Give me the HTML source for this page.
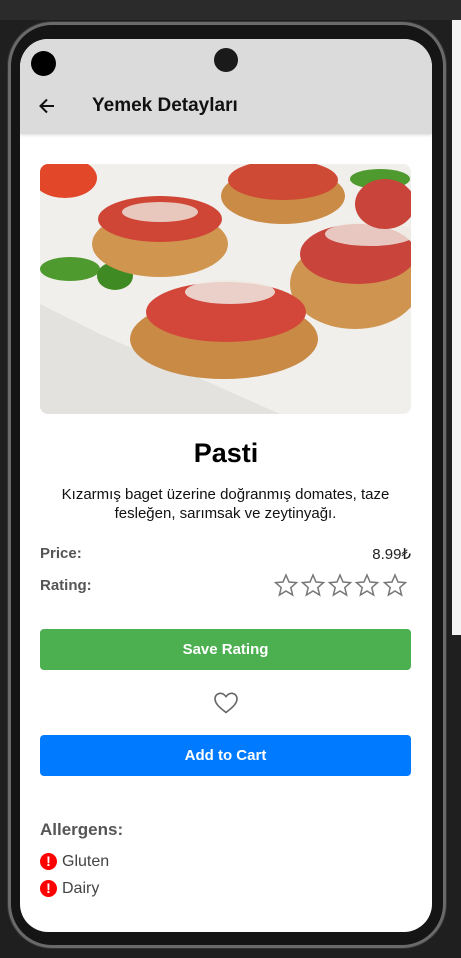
<!DOCTYPE html>
<html><head><meta charset="utf-8"><style>
*{margin:0;padding:0;box-sizing:border-box}
body{width:461px;height:958px;overflow:hidden;background:#1f1f1f;font-family:"Liberation Sans",sans-serif;position:relative}
.a{position:absolute}
</style></head><body>
<div class="a" style="left:0;top:0;width:461px;height:20px;background:#2b2b2b"></div>
<div class="a" style="left:452px;top:20px;width:9px;height:615px;background:#f3f3f3"></div>
<div class="a" style="left:8px;top:22px;width:438px;height:926px;border-radius:44px;background:#151515;border:3px solid #6a6a6a;box-shadow:0 0 0 1px #333"></div>
<div class="a" style="left:20px;top:39px;width:412px;height:893px;border-radius:28px;background:#fff;overflow:hidden">
  <div class="a" style="left:0;top:0;width:412px;height:95px;background:#dbdbdb;box-shadow:0 1px 3px rgba(0,0,0,.15)"></div>
  <div class="a" style="left:11px;top:12px;width:25px;height:25px;border-radius:50%;background:#000"></div>
  <div class="a" style="left:194px;top:9px;width:24px;height:24px;border-radius:50%;background:#1a1a1a"></div>
  <svg class="a" style="left:17px;top:57px" width="20" height="20" viewBox="0 0 20 20"><path d="M17 10H4M10 3.5L3.5 10 10 16.5" stroke="#111" stroke-width="2" fill="none"/></svg>
  <div class="a" style="left:72px;top:56px;font-size:19px;font-weight:bold;color:#111">Yemek Detayları</div>
</div>
<svg class="a" style="left:40px;top:164px;border-radius:8px" width="371" height="250" viewBox="0 0 371 250">
  <rect width="371" height="250" fill="#f1efec"/>
  <polygon points="0,140 60,170 240,250 0,250" fill="#e4e2de"/>
  <ellipse cx="25" cy="14" rx="32" ry="20" fill="#e2472a"/>
  <ellipse cx="30" cy="105" rx="30" ry="12" fill="#4f9a2e"/>
  <ellipse cx="75" cy="112" rx="18" ry="14" fill="#3f8a22"/>
  <ellipse cx="340" cy="15" rx="30" ry="10" fill="#4f9a2e"/>
  <ellipse cx="243" cy="32" rx="62" ry="28" fill="#c98b45"/>
  <ellipse cx="243" cy="16" rx="55" ry="20" fill="#cf4a34"/>
  <ellipse cx="120" cy="80" rx="68" ry="33" fill="#d09650"/>
  <ellipse cx="120" cy="55" rx="62" ry="23" fill="#cf4636"/>
  <ellipse cx="120" cy="48" rx="38" ry="10" fill="#ede7e0" opacity=".8"/>
  <ellipse cx="315" cy="120" rx="65" ry="45" fill="#cf9550"/>
  <ellipse cx="318" cy="90" rx="58" ry="30" fill="#c9443a"/>
  <ellipse cx="330" cy="70" rx="45" ry="12" fill="#efe9e2" opacity=".8"/>
  <ellipse cx="345" cy="40" rx="30" ry="25" fill="#c9443a"/>
  <ellipse cx="184" cy="175" rx="94" ry="40" fill="#c98a45"/>
  <ellipse cx="186" cy="148" rx="80" ry="30" fill="#d2473a"/>
  <ellipse cx="190" cy="128" rx="45" ry="12" fill="#efe9e2" opacity=".85"/>
</svg>
<div class="a" style="left:20px;top:438px;width:412px;text-align:center;font-size:27px;font-weight:bold;color:#000">Pasti</div>
<div class="a" style="left:40px;top:485px;width:371px;text-align:center;font-size:15px;line-height:19px;color:#111">Kızarmış baget üzerine doğranmış domates, taze fesleğen, sarımsak ve zeytinyağı.</div>
<div class="a" style="left:40px;top:545px;font-size:15px;font-weight:bold;color:#555">Price:</div>
<div class="a" style="left:340px;top:545px;width:71px;text-align:right;font-size:15px;color:#222">8.99₺</div>
<div class="a" style="left:40px;top:577px;font-size:15px;font-weight:bold;color:#555">Rating:</div>
<svg class="a" style="left:274px;top:573px" width="134" height="26" viewBox="0 0 134 26">
  <g fill="none" stroke="#777" stroke-width="1.5">
    <path id="s" d="M12 2l3 7 7.5.6-5.7 5 1.8 7.4L12 18l-6.6 4 1.8-7.4-5.7-5L9 9z"/>
    <use href="#s" x="27"/><use href="#s" x="54"/><use href="#s" x="81"/><use href="#s" x="109"/>
  </g>
</svg>
<div class="a" style="left:40px;top:629px;width:371px;height:41px;border-radius:4px;background:#4caf50;color:#fff;font-weight:bold;font-size:15px;text-align:center;line-height:42px">Save Rating</div>
<svg class="a" style="left:213px;top:691px" width="26" height="24" viewBox="0 0 26 24"><path d="M13 21.5C6 16 2 12.5 2 7.8 2 4.6 4.5 2.3 7.4 2.3c2.3 0 4.1 1.4 5.6 3.3 1.5-1.9 3.3-3.3 5.6-3.3 2.9 0 5.4 2.3 5.4 5.5 0 4.7-4 8.2-11 13.7z" fill="none" stroke="#666" stroke-width="1.6"/></svg>
<div class="a" style="left:40px;top:735px;width:371px;height:41px;border-radius:4px;background:#007bff;color:#fff;font-weight:bold;font-size:15px;text-align:center;line-height:42px">Add to Cart</div>
<div class="a" style="left:40px;top:820px;font-size:17px;font-weight:bold;color:#555">Allergens:</div>
<div class="a" style="left:40px;top:853px;width:17px;height:17px;border-radius:50%;background:#f00;color:#fff;font-weight:bold;font-size:14px;text-align:center;line-height:17px">!</div>
<div class="a" style="left:62px;top:853px;font-size:16px;color:#444">Gluten</div>
<div class="a" style="left:40px;top:880px;width:17px;height:17px;border-radius:50%;background:#f00;color:#fff;font-weight:bold;font-size:14px;text-align:center;line-height:17px">!</div>
<div class="a" style="left:62px;top:880px;font-size:16px;color:#444">Dairy</div>
</body></html>
